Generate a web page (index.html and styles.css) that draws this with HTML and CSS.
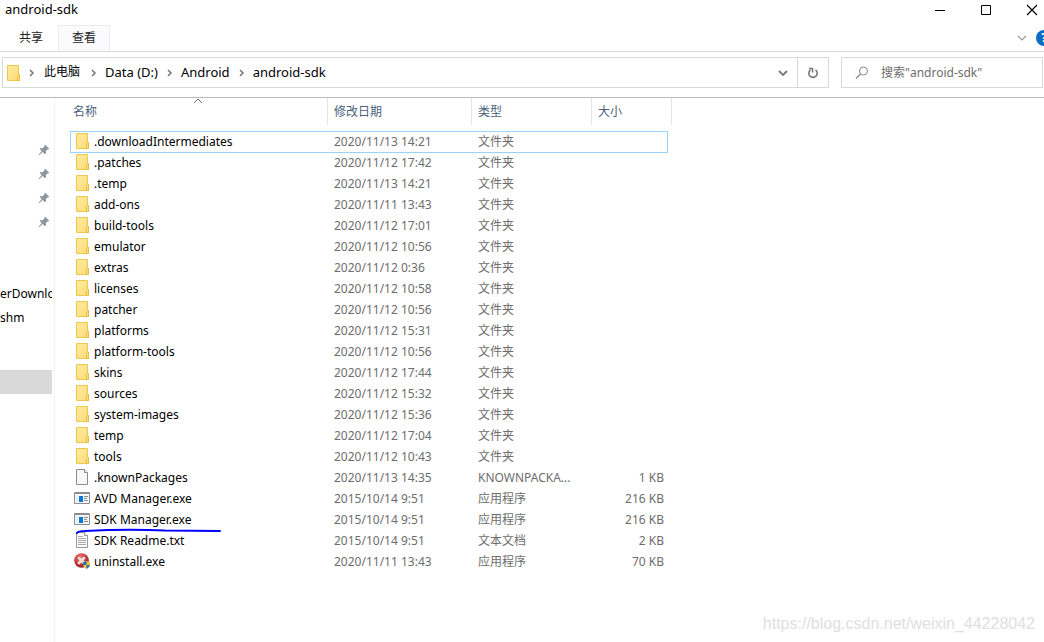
FILE: index.html
```html
<!DOCTYPE html>
<html lang="zh-CN">
<head>
<meta charset="utf-8">
<meta name="viewport" content="width=device-width, initial-scale=1">
<title>android-sdk</title>
<link rel="stylesheet" href="styles.css">
</head>
<body>
<svg class="defs" aria-hidden="true">
  <defs>
    <linearGradient id="fold" x1="0" y1="0" x2="1" y2="1"><stop offset="0" stop-color="#ffeaa0"/><stop offset="1" stop-color="#fddc78"/></linearGradient>
    <radialGradient id="ball" cx=".4" cy=".3" r=".7"><stop offset="0" stop-color="#f08078"/><stop offset=".6" stop-color="#cf3535"/><stop offset="1" stop-color="#8e1f22"/></radialGradient>
    <symbol id="folder" viewBox="0 0 16 16"><path d="M2.5.5h11v9h1v6h-12z" fill="url(#fold)" stroke="#edc84c"/><path d="M12.5 15.5v-5l1-1h1v6z" fill="#fde391" stroke="#e6bd3c"/></symbol>
    <symbol id="file" viewBox="0 0 16 16"><path d="M2.5.5h8l3 3v12h-11z" fill="#f8f8f8" stroke="#8c8c8c"/><path d="M10.5.5v3h3" fill="#fff" stroke="#8c8c8c"/></symbol>
    <symbol id="text" viewBox="0 0 16 16"><path d="M2.5.5h8l3 3v12h-11z" fill="#fafafa" stroke="#999"/><path d="M10.5.5v3h3" fill="#fff" stroke="#999"/><path d="M4 4.5h5M4 6.5h8M4 8.5h8M4 10.5h8M4 12.5h8" stroke="#aaa"/></symbol>
    <symbol id="app" viewBox="0 0 16 16"><path d="M.5 2.500h15v11H.5z" fill="#f7f7f7" stroke="#8a8e92"/><path d="M1 3.500h14" stroke="#8a8e92"/><path d="M5 6h4v6H5z" fill="#0a78d4"/><path d="M2 5h2v7H2z" fill="#e6ecf1"/><path d="M10 6.500h4M10 8.500h3M10 10.500h4" stroke="#8a8e92"/></symbol>
    <symbol id="uninstall" viewBox="0 0 16 16"><circle cx="7.500" cy="7.500" r="7.300" fill="url(#ball)"/><path d="M5 3l2.500 2L10 3l2 2-2 2.500L12 10l-2 2-2.500-2L5 12l-2-2 2-2.500L3 5z" fill="#f2dddd" stroke="#9b4545" stroke-width=".5"/><path d="M12.500 8l3.500 1.500v2.500q-.5 2.500-3.500 4-3-1.500-3.500-4V9.500z" fill="#f5c23c"/><path d="M12.500 8v4H9V9.500zM12.500 12H16q-.5 2.500-3.500 4z" fill="#286fae"/></symbol>
    <symbol id="pin" viewBox="0 0 12 12"><path d="M7.200.8l4 4-1 .7-.8-.1-1.600 1.800.2 2-1 1-2.300-2.300L1 11.200l-.4-.4 3.200-3.700L1.600 4.900l1-.9 2 .2 1.900-1.700-.1-.8z" fill="#8a96a0"/></symbol>
    <symbol id="crumb" viewBox="0 0 6 8"><path d="M1 1l3 3-3 3" fill="none" stroke="#777" stroke-width="1.500"/></symbol>
  </defs>
</svg>
<div class="window">
  <header class="titlebar">
    <h1 class="title">android-sdk</h1>
    <div class="controls">
      <button class="control" aria-label="最小化"><svg width="12" height="12"><path d="M1 6.500h10" stroke="#000"/></svg></button>
      <button class="control" aria-label="最大化"><svg width="12" height="12"><path d="M1.500 1.500h9v9h-9z" fill="none" stroke="#000"/></svg></button>
      <button class="control" aria-label="关闭"><svg width="12" height="12"><path d="M1 1l10 10M11 1L1 11" stroke="#000" stroke-width="1.200"/></svg></button>
    </div>
  </header>
  <nav class="ribbon" aria-label="功能区">
    <button class="tab">共享</button>
    <button class="tab tab-active">查看</button>
    <button class="expand" aria-label="展开功能区"><svg width="10" height="6"><path d="M1 1l4 4 4-4" fill="none" stroke="#999" stroke-width="1.200"/></svg></button>
    <button class="help" aria-label="帮助">?</button>
  </nav>
  <div class="toolbar">
    <div class="address">
      <svg class="icon" aria-hidden="true"><use href="#folder"/></svg>
      <svg class="crumb-arrow" aria-hidden="true"><use href="#crumb"/></svg>
      <button class="crumb crumb-root">此电脑</button>
      <svg class="crumb-arrow" aria-hidden="true"><use href="#crumb"/></svg>
      <button class="crumb">Data (D:)</button>
      <svg class="crumb-arrow" aria-hidden="true"><use href="#crumb"/></svg>
      <button class="crumb">Android</button>
      <svg class="crumb-arrow" aria-hidden="true"><use href="#crumb"/></svg>
      <button class="crumb">android-sdk</button>
      <button class="history" aria-label="以前的位置"><svg width="10" height="8"><path d="M1 2l4 4 4-4" fill="none" stroke="#777" stroke-width="1.800"/></svg></button>
      <button class="refresh" aria-label="刷新"><svg width="12" height="12"><path d="M3.500 2.800A4.200 4.200 0 1 0 8.500 2.800" fill="none" stroke="#777" stroke-width="1.600"/><path d="M2 1.500h3.500v4" fill="none" stroke="#777" stroke-width="1.500"/></svg></button>
    </div>
    <label class="search">
      <svg width="14" height="14" aria-hidden="true"><circle cx="8.500" cy="5" r="4" fill="none" stroke="#888"/><path d="M5.500 8L1 12.500" stroke="#888" stroke-width="1.200"/></svg>
      <input class="search-input" type="text" aria-label="搜索" placeholder='搜索"android-sdk"'>
    </label>
  </div>
  <div class="content">
    <aside class="sidebar">
      <ul class="tree">
        <li class="node"><svg class="pin"><use href="#pin"/></svg></li>
        <li class="node"><svg class="pin"><use href="#pin"/></svg></li>
        <li class="node"><svg class="pin"><use href="#pin"/></svg></li>
        <li class="node"><svg class="pin"><use href="#pin"/></svg></li>
        <li class="node"></li>
        <li class="node"></li>
        <li class="node">erDownlo</li>
        <li class="node">shm</li>
      </ul>
      <div class="selected-node"></div>
    </aside>
    <main class="files">
      <table class="list">
        <colgroup><col class="col-name"><col class="col-date"><col class="col-type"><col class="col-size"></colgroup>
        <thead>
          <tr><th>名称<svg class="sort" width="10" height="6"><path d="M1 5l4-4 4 4" fill="none" stroke="#666"/></svg></th><th>修改日期</th><th>类型</th><th>大小</th></tr>
        </thead>
        <tbody id="rows"></tbody>
      </table>
    </main>
  </div>
  <p class="watermark">https://blog.csdn.net/weixin_44228042</p>
</div>
<script src="files.js"></script>
</body>
</html>
```
FILE: styles.css
```css
* { box-sizing: border-box; }
body {
  margin: 0;
  background: #fff;
  color: #000;
  font: 13px/20px "Noto Sans", "Noto Sans CJK SC", sans-serif;
}
button { margin: 0; padding: 0; border: 0; background: none; color: inherit; font: inherit; }
button svg, label svg { display: block; }
.defs { position: absolute; width: 0; height: 0; }
.window { position: relative; display: flex; flex-direction: column; min-height: 100vh; overflow: hidden; }

.titlebar { display: flex; justify-content: space-between; height: 25px; padding-left: 5px; }
.title { margin: 0; font-size: 13px; font-weight: 400; line-height: 18px; }
.controls { display: flex; gap: 34px; height: 19px; padding-right: 6px; }
.control { display: grid; place-items: center; width: 12px; }

.ribbon { display: flex; align-items: center; gap: 1px; height: 27px; padding-left: 5px; border-bottom: 1px solid #dadbdc; }
.tab { width: 52px; height: 26px; padding-bottom: 1px; font-size: 12px; color: #222; }
.tab-active { border: 1px solid #ebecec; border-bottom: 0; background: #fbfbfe; }
.expand { margin-left: auto; margin-right: 8px; }
.help { flex: none; width: 16px; height: 16px; margin-right: -8px; border-radius: 50%; background: #0b6cc4; color: #fff; font-size: 12px; font-weight: 700; line-height: 16px; }

.toolbar { display: flex; gap: 12px; padding: 5px 1px 9px 2px; border-bottom: 1px solid #b8b8b8; }
.address, .search { height: 31px; border: 1px solid #d9d9d9; }
.address { display: flex; flex: 1; align-items: center; padding-left: 2px; }
.icon { flex: none; width: 16px; height: 16px; }
.crumb-arrow { flex: none; width: 6px; height: 8px; margin: 0 8px; }
.crumb { padding-bottom: 2px; white-space: nowrap; }
.crumb-root { margin: 0 2px 0 1px; font-size: 12px; }
.crumb + .crumb-arrow { margin-left: 9px; }
.history { margin-left: auto; margin-right: 9px; }
.refresh { display: grid; place-items: center; align-self: stretch; width: 31px; border-left: 1px solid #d9d9d9; }
.search { display: flex; align-items: center; gap: 12px; width: 202px; padding-left: 13px; }
.search-input { flex: 1; min-width: 0; padding: 0; border: 0; outline: 0; background: none; font: inherit; font-size: 12px; }
.search-input::placeholder { color: #6d6d6d; opacity: 1; }

.content { display: flex; flex: 1; }
.sidebar { width: 55px; padding: 40px 2px 0 0; border-right: 1px solid #f2f2f2; }
.tree { margin: 0; padding: 0; list-style: none; }
.node { height: 24px; overflow: hidden; line-height: 24px; font-size: 12px; }
.pin { display: block; width: 12px; height: 12px; margin: 6px 0 0 38px; }
.selected-node { height: 24px; margin-top: 40px; background: #d9d9d9; }

.files { flex: 1; padding-left: 15px; }
.list { width: 602px; border-spacing: 0; table-layout: fixed; }
.col-name { width: 258px; }
.col-date { width: 144px; }
.col-type { width: 120px; }
.col-size { width: 80px; }
.list th { position: relative; height: 27px; padding: 0 6px; border-right: 1px solid #e5e5e5; color: #4c607a; font-size: 12px; font-weight: 400; text-align: left; }
.list th:first-child { padding-left: 3px; }
.sort { position: absolute; top: 0; left: 50%; margin-left: -6px; }
.list tbody::before { content: ""; display: block; height: 6px; }
.row { position: relative; }
.row td { height: 21px; padding: 0 6px; color: #6d6d6d; font-size: 12px; line-height: 21px; overflow: hidden; text-overflow: ellipsis; white-space: nowrap; }
.row td:first-child { padding: 0 4px; color: #000; overflow: visible; }
.row td:nth-child(3) { padding-right: 12px; }
.row td:last-child { padding-right: 8px; text-align: right; }
.row-focus::after { content: ""; position: absolute; inset: 0 4px -1px 0; border: 1px solid #99d1ff; }
.name { display: flex; align-items: flex-start; gap: 4px; }
.name .icon { margin-top: 2px; }
.ink { position: absolute; left: 5px; top: 19px; z-index: 1; }

.watermark { position: absolute; right: 9px; bottom: 8px; margin: 0; color: #e0e0e0; font: 16px/20px "Liberation Sans", sans-serif; }
```
FILE: files.js
```js
const files = [
  ["folder", ".downloadIntermediates", "2020/11/13 14:21", "文件夹", ""],
  ["folder", ".patches", "2020/11/12 17:42", "文件夹", ""],
  ["folder", ".temp", "2020/11/13 14:21", "文件夹", ""],
  ["folder", "add-ons", "2020/11/11 13:43", "文件夹", ""],
  ["folder", "build-tools", "2020/11/12 17:01", "文件夹", ""],
  ["folder", "emulator", "2020/11/12 10:56", "文件夹", ""],
  ["folder", "extras", "2020/11/12 0:36", "文件夹", ""],
  ["folder", "licenses", "2020/11/12 10:58", "文件夹", ""],
  ["folder", "patcher", "2020/11/12 10:56", "文件夹", ""],
  ["folder", "platforms", "2020/11/12 15:31", "文件夹", ""],
  ["folder", "platform-tools", "2020/11/12 10:56", "文件夹", ""],
  ["folder", "skins", "2020/11/12 17:44", "文件夹", ""],
  ["folder", "sources", "2020/11/12 15:32", "文件夹", ""],
  ["folder", "system-images", "2020/11/12 15:36", "文件夹", ""],
  ["folder", "temp", "2020/11/12 17:04", "文件夹", ""],
  ["folder", "tools", "2020/11/12 10:43", "文件夹", ""],
  ["file", ".knownPackages", "2020/11/13 14:35", "KNOWNPACKA...", "1 KB"],
  ["app", "AVD Manager.exe", "2015/10/14 9:51", "应用程序", "216 KB"],
  ["app", "SDK Manager.exe", "2015/10/14 9:51", "应用程序", "216 KB"],
  ["text", "SDK Readme.txt", "2015/10/14 9:51", "文本文档", "2 KB"],
  ["uninstall", "uninstall.exe", "2020/11/11 13:43", "应用程序", "70 KB"]
];

const ink = '<svg class="ink" width="148" height="8"><path d="M2 5q1-2 8-2Q50 1 90 2.500L145 3" fill="none" stroke="#00f" stroke-width="2" stroke-linecap="round"/></svg>';

document.getElementById("rows").innerHTML = files.map(([icon, name, date, type, size], i) =>
  `<tr class="row${i === 0 ? " row-focus" : ""}">
    <td><span class="name"><svg class="icon" aria-hidden="true"><use href="#${icon}"/></svg>${name}</span>${name === "SDK Manager.exe" ? ink : ""}</td>
    <td>${date}</td><td>${type}</td><td>${size}</td>
  </tr>`).join("");
```
